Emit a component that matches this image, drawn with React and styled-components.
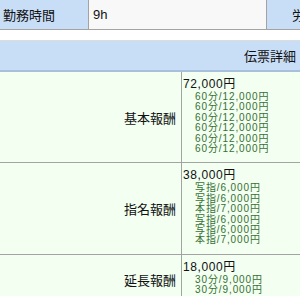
import React from 'react'
import styled, { createGlobalStyle } from 'styled-components'

const details = [
	{
		label: '基本報酬',
		total: '72,000円',
		items: ['60分/12,000円', '60分/12,000円', '60分/12,000円', '60分/12,000円', '60分/12,000円', '60分/12,000円']
	},
	{
		label: '指名報酬',
		total: '38,000円',
		items: ['写指/6,000円', '写指/6,000円', '本指/7,000円', '写指/6,000円', '写指/6,000円', '本指/7,000円']
	},
	{
		label: '延長報酬',
		total: '18,000円',
		items: ['30分/9,000円', '30分/9,000円']
	}
]

const App = () => {
	return (
		<>
			<GlobalStyle />
			<Page>
				<InfoRow>
					<InfoLabel>勤務時間</InfoLabel>
					<InfoValue>9h</InfoValue>
					<InfoLabel $offset>労働時間</InfoLabel>
				</InfoRow>

				<Detail>
					<DetailHeader>伝票詳細</DetailHeader>

					{details.map(({label, total, items}) => (
						<DetailRow key={label}>
							<RowLabel>{label}</RowLabel>
							<RowValue>
								<Total>{total}</Total>
								{items.map((item, idx) => (
									<Item key={idx}>{item}</Item>
								))}
							</RowValue>
						</DetailRow>
					))}
				</Detail>
			</Page>
		</>
	)
}

export default App


const GlobalStyle = createGlobalStyle`
	body {
		margin: 0;
		overflow: hidden;
		background: #ffffff;
		font-family: "Liberation Sans", "Noto Sans CJK JP", sans-serif;
		color: #111111;
	}
`

const Page = styled.div`
	width: 340px;
`

const InfoRow = styled.div`
	display: grid;
	grid-template-columns: 89px 178px 1fr;
	height: 29px;

	border-bottom: 1px solid #a3a3a3;
`

const InfoLabel = styled.div`
	display: flex;
	align-items: center;

	padding-left: ${({ $offset }) => $offset ? '25px' : '3px'};

	background-color: #c8ddf6;
	border-right: ${({ $offset }) => $offset ? 'none' : '1px solid #a3a3a3'};

	font-size: 13px;
	white-space: nowrap;
`

const InfoValue = styled.div`
	display: flex;
	align-items: center;

	padding-left: 4px;

	background-color: #f8f8f8;
	border-right: 1px solid #a3a3a3;

	font-size: 13px;
`

const Detail = styled.div`
	width: 300px;
	margin-top: 10px;

	border-top: 1px solid #dcdcdc;
`

const DetailHeader = styled.div`
	height: 29px;

	display: flex;
	align-items: center;
	justify-content: flex-end;

	padding-right: 4px;

	background-color: #c8ddf6;
	border-bottom: 2px solid #a9c0dc;

	font-size: 13px;
`

const DetailRow = styled.div`
	display: grid;
	grid-template-columns: 182px 1fr;

	background-color: #f2fff1;
	border-bottom: 1px solid #a3a3a3;
`

const RowLabel = styled.div`
	display: flex;
	align-items: center;
	justify-content: flex-end;

	padding-right: 5px;

	border-right: 1px solid #a3a3a3;

	font-size: 13px;
`

const RowValue = styled.div`
	display: flex;
	flex-direction: column;

	padding: 4px 0 8px 1px;
`

const Total = styled.div`
	font-size: 12px;
	line-height: 16px;
	letter-spacing: 0.6px;
`

const Item = styled.div`
	padding-left: 12px;

	color: #377032;

	font-size: 10px;
	line-height: 10.4px;
	letter-spacing: 0.9px;
	white-space: nowrap;
`
